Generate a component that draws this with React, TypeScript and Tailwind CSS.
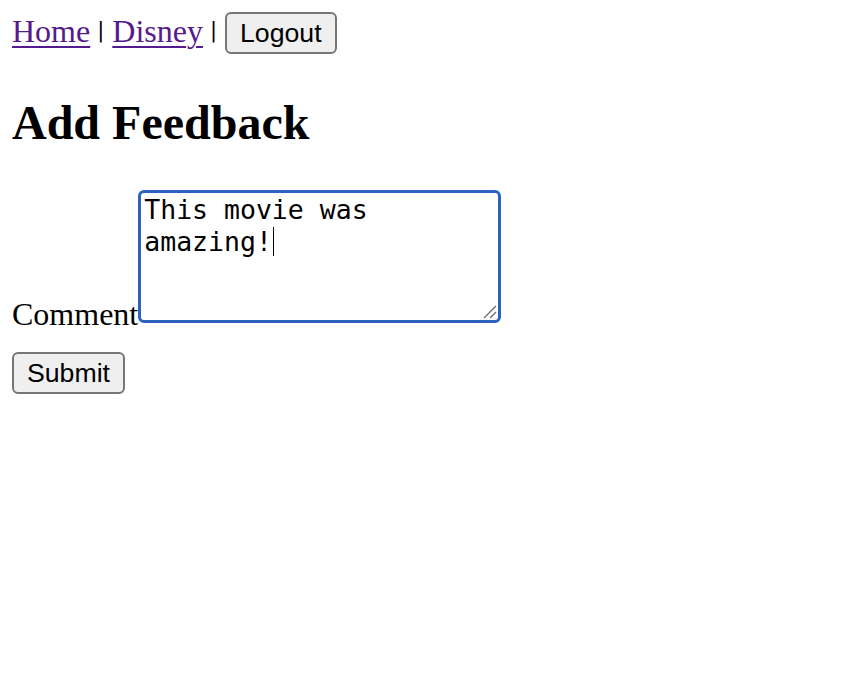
import React from "react";

const serif = { fontFamily: '"Liberation Serif", "Times New Roman", serif' };
const sans = { fontFamily: '"Liberation Sans", Arial, sans-serif' };
const mono = { fontFamily: '"DejaVu Sans Mono", Menlo, monospace' };
const bar = { fontFamily: '"DejaVu Sans", sans-serif' };

function NavButton({ children }: { children: React.ReactNode }) {
  return (
    <button
      style={sans}
      className="h-[42px] px-[13px] bg-[#efefef] border-2 border-[#767676] rounded-[6px] text-[26.67px] leading-[30px] text-black"
    >
      {children}
    </button>
  );
}

function Sep() {
  return (
    <span className="whitespace-pre">
      {" "}
      <span style={bar} className="relative -top-[5px] -ml-[1px] text-[21px] leading-none">
        |
      </span>{" "}
    </span>
  );
}

export default function App() {
  return (
    <div className="min-h-screen bg-white p-[12px] text-black" style={serif}>
      {/* Nav */}
      <nav className="flex items-baseline text-[32px] leading-[37px]">
        <a href="#" className="text-[#551a8b] underline decoration-[2px] underline-offset-[4px]">
          Home
        </a>
        <Sep />
        <a href="#" className="text-[#551a8b] underline decoration-[2px] underline-offset-[4px]">
          Disney
        </a>
        <Sep />
        <NavButton>Logout</NavButton>
      </nav>

      <h1 className="mt-[41px] text-[48px] font-bold leading-[55px]">Add Feedback</h1>

      {/* Form */}
      <form className="mt-[40px]">
        <div className="flex items-end">
          <label className="text-[32px] leading-[37px]">Comment</label>
          <div className="relative mb-[10px] w-[363px] h-[133px] border-[3px] border-[#2b62c0] rounded-[6px] bg-white pt-[1px] pl-[3px]">
            <div style={mono} className="text-[26.5px] leading-[31.5px] text-black">
              <div>This movie was</div>
              <div className="flex items-center">
                amazing!
                <span className="inline-block w-[1.5px] h-[29px] bg-black ml-[1px]" />
              </div>
            </div>
            <svg
              className="absolute right-[1px] bottom-[1px]"
              width="16"
              height="16"
              viewBox="0 0 16 16"
            >
              <line x1="15" y1="3" x2="3" y2="15" stroke="#6b6b6b" strokeWidth="1.3" />
              <line x1="15" y1="9" x2="9" y2="15" stroke="#6b6b6b" strokeWidth="1.3" />
            </svg>
          </div>
        </div>
        <div className="mt-[19px]">
          <NavButton>Submit</NavButton>
        </div>
      </form>
    </div>
  );
}
